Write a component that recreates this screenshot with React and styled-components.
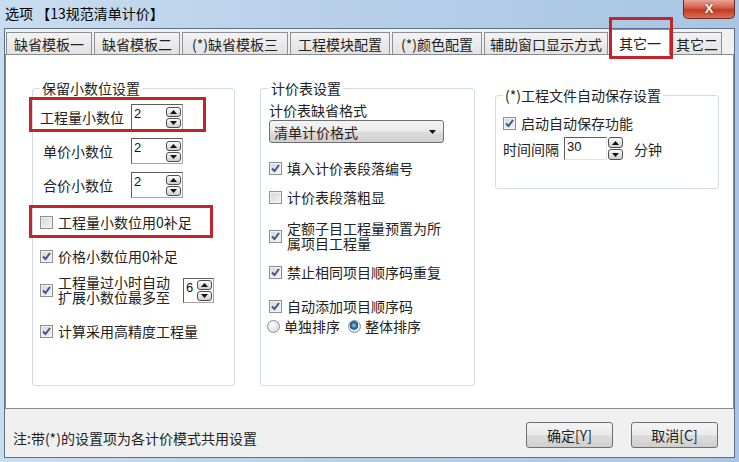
import React from "react";
import styled, { createGlobalStyle } from "styled-components";

const GlobalStyle = createGlobalStyle`
  html, body {
    margin: 0;
    padding: 0;
  }
  body {
    width: 739px;
    height: 462px;
    overflow: hidden;
    font-family: "Noto Sans CJK SC", "Liberation Sans", sans-serif;
    font-size: 14px;
    color: #222;
  }
`;

const tabs = [
  { label: "缺省模板一", w: 86 },
  { label: "缺省模板二", w: 86 },
  { label: "(*)缺省模板三", w: 106 },
  { label: "工程模块配置", w: 100 },
  { label: "(*)颜色配置", w: 90 },
  { label: "辅助窗口显示方式", w: 124 },
  { label: "其它一", w: 60, active: true },
  { label: "其它二", w: 50 },
];

const Arrow = ({ down }) => (
  <svg width="9" height="6" viewBox="0 0 9 6">
    <path d={down ? "M1 1 L8 1 L4.5 5 Z" : "M1 5 L8 5 L4.5 1 Z"} fill="#111" />
  </svg>
);

const Spinner = ({ h = 10 }) => (
  <SpinBox>
    <SpinBtn $h={h}>
      <Arrow />
    </SpinBtn>
    <SpinBtn $h={h}>
      <Arrow down />
    </SpinBtn>
  </SpinBox>
);

const Checkbox = ({ checked }) => (
  <CheckBoxShape>
    {checked && (
      <svg width="11" height="11" viewBox="0 0 11 11">
        <path d="M2 5.5 L4.5 8 L9 2" stroke="#3f558c" strokeWidth="2" fill="none" />
      </svg>
    )}
  </CheckBoxShape>
);

const Check = ({ checked, children, mt, mark }) => (
  <CheckRow $mt={mt}>
    <Checkbox checked={checked} />
    {children}
    {mark && <Mark {...mark} />}
  </CheckRow>
);

const NumField = ({ label, indent, mt, mark }) => (
  <NumRow $mt={mt}>
    <FieldLabel $indent={indent}>{label}</FieldLabel>
    <NumInput $w={52} $h={26}>
      <InputValue>2</InputValue>
      <Spinner />
    </NumInput>
    {mark && <Mark {...mark} />}
  </NumRow>
);

const App = () => {
  return (
    <>
      <GlobalStyle />
      <Window>
        <TitleBar>
          <Title>选项 【13规范清单计价】</Title>
          <CloseBtn>X</CloseBtn>
        </TitleBar>
        <Body>
          <TabRow>
            {tabs.map((t) => (
              <Tab key={t.label} $w={t.w} $active={t.active}>
                {t.label}
                {t.active && <Mark top={-13} left={-2} width={64} height={42} />}
              </Tab>
            ))}
          </TabRow>

          <Panel>
            <Group $w={203} $h={306} $pad="8px 7px 0 7px">
              <Legend>保留小数位设置</Legend>
              <Column>
                <NumField
                  label="工程量小数位"
                  mark={{ top: -7, left: -11, width: 177, height: 35 }}
                />
                <NumField label="单价小数位" indent={3} mt={8} />
                <NumField label="合价小数位" indent={3} mt={8} />
                <Check mt={16} mark={{ top: -9, left: -11, width: 184, height: 33 }}>
                  <Text>工程量小数位用0补足</Text>
                </Check>
                <Check checked mt={18}>
                  <Text>价格小数位用0补足</Text>
                </Check>
                <Check checked mt={11}>
                  <TwoLine>
                    工程量过小时自动
                    <br />
                    扩展小数位最多至
                  </TwoLine>
                  <NumInput $w={31} $h={25} $ml={8}>
                    <InputValue>6</InputValue>
                    <Spinner />
                  </NumInput>
                </Check>
                <Check checked mt={18}>
                  <Text>计算采用高精度工程量</Text>
                </Check>
              </Column>
            </Group>

            <Group $w={215} $h={306} $pad="6px 8px 0 8px">
              <Legend>计价表设置</Legend>
              <Column>
                <Text>计价表缺省格式</Text>
                <Select>
                  <span>清单计价格式</span>
                  <Arrow down />
                </Select>
                <Check checked mt={17}>
                  <Text>填入计价表段落编号</Text>
                </Check>
                <Check mt={13}>
                  <Text>计价表段落粗显</Text>
                </Check>
                <Check checked mt={16}>
                  <TwoLine>
                    定额子目工程量预置为所
                    <br />
                    属项目工程量
                  </TwoLine>
                </Check>
                <Check checked mt={13}>
                  <Text>禁止相同项目顺序码重复</Text>
                </Check>
                <Check checked mt={18}>
                  <Text>自动添加项目顺序码</Text>
                </Check>
                <RadioRow>
                  <RadioItem>
                    <Radio />
                    <Text>单独排序</Text>
                  </RadioItem>
                  <RadioItem>
                    <Radio $on />
                    <Text>整体排序</Text>
                  </RadioItem>
                </RadioRow>
              </Column>
            </Group>

            <Group $w={224} $h={102} $mt={7} $pad="12px 8px 0 7px">
              <Legend>(*)工程文件自动保存设置</Legend>
              <Column>
                <Check checked>
                  <Text>启动自动保存功能</Text>
                </Check>
                <TimeRow>
                  <Text>时间间隔</Text>
                  <NumInput $w={43} $h={23} $ml={4} $flat>
                    <InputValue>30</InputValue>
                  </NumInput>
                  <Spinner h={11} />
                  <Text $ml={10}>分钟</Text>
                </TimeRow>
              </Column>
            </Group>
          </Panel>

          <Footer>
            <Note>注:带(*)的设置项为各计价模式共用设置</Note>
            <Buttons>
              <Button>确定[Y]</Button>
              <Button>取消[C]</Button>
            </Buttons>
          </Footer>
        </Body>
      </Window>
    </>
  );
};

export default App;

const Window = styled.div`
  width: 739px;
  height: 462px;
  display: flex;
  flex-direction: column;
  background: linear-gradient(90deg, #c9ddf0 0%, #b9d1ea 40%, #a9c5e3 100%);
`;

const TitleBar = styled.div`
  height: 28px;
  display: flex;
  align-items: flex-start;
  padding-left: 5px;
`;

const Title = styled.div`
  padding-top: 5px;
  line-height: 16px;
  color: #000;
`;

const CloseBtn = styled.div`
  margin-left: auto;
  margin-right: 4px;
  width: 52px;
  height: 19px;
  box-sizing: border-box;
  border: 1px solid #6e2b22;
  border-top: none;
  border-radius: 0 0 5px 5px;
  background: linear-gradient(180deg, #e9a597 0%, #d25a45 45%, #c2391f 55%, #d8705a 100%);
  color: #fff;
  font-family: "Liberation Sans", sans-serif;
  font-weight: bold;
  font-size: 13px;
  text-align: center;
  line-height: 17px;
  text-shadow: 0 0 2px #5a1a10;
`;

const Body = styled.div`
  margin: 0 4px;
  height: 430px;
  box-sizing: border-box;
  border: 1px solid #5d7286;
  background: #f0f0f0;
  display: flex;
  flex-direction: column;
`;

const TabRow = styled.div`
  height: 25px;
  display: flex;
  align-items: flex-end;
  gap: 2px;
  padding-left: 1px;
`;

const Tab = styled.div`
  position: relative;
  box-sizing: border-box;
  width: ${(p) => p.$w}px;
  height: ${(p) => (p.$active ? 26 : 22)}px;
  margin-bottom: ${(p) => (p.$active ? -1 : 0)}px;
  z-index: ${(p) => (p.$active ? 2 : 1)};
  border: 1px solid #8c8e94;
  border-bottom: none;
  background: ${(p) => (p.$active ? "#fff" : "linear-gradient(180deg, #f3f3f3, #e2e2e2)")};
  display: flex;
  align-items: center;
  justify-content: center;
  line-height: 16px;
  white-space: nowrap;
`;

const Mark = styled.div.attrs((p) => ({
  style: { top: p.top, left: p.left, width: p.width, height: p.height },
}))`
  position: absolute;
  box-sizing: border-box;
  border: 3px solid #c3242b;
  pointer-events: none;
`;

const Panel = styled.div`
  height: 355px;
  box-sizing: border-box;
  border: 1px solid #898c95;
  background: #fff;
  display: flex;
  align-items: flex-start;
  padding: 25px 0 0 26px;
`;

const Group = styled.fieldset`
  box-sizing: border-box;
  flex: none;
  width: ${(p) => p.$w}px;
  height: ${(p) => p.$h}px;
  margin: ${(p) => p.$mt || 0}px 25px 0 0;
  &:nth-of-type(2) {
    margin-right: 20px;
  }
  padding: ${(p) => p.$pad};
  border: 1px solid #d3dce3;
  border-radius: 3px;
  min-inline-size: 0;
`;

const Legend = styled.legend`
  padding: 0 2px;
  line-height: 16px;
`;

const Column = styled.div`
  display: flex;
  flex-direction: column;
  align-items: flex-start;
`;

const Text = styled.span`
  line-height: 16px;
  white-space: nowrap;
  margin-left: ${(p) => p.$ml || 0}px;
`;

const TwoLine = styled.span`
  line-height: 15px;
  white-space: nowrap;
`;

const NumRow = styled.div`
  position: relative;
  margin-top: ${(p) => p.$mt || 0}px;
  display: grid;
  grid-template-columns: 91px auto;
  align-items: center;
`;

const FieldLabel = styled.span`
  line-height: 16px;
  padding-left: ${(p) => p.$indent || 0}px;
  white-space: nowrap;
`;

const NumInput = styled.div`
  box-sizing: border-box;
  width: ${(p) => p.$w}px;
  height: ${(p) => p.$h}px;
  margin-left: ${(p) => p.$ml || 0}px;
  border: 1px solid #8a8a8a;
  border-top-color: #5e5e5e;
  border-left-color: #5e5e5e;
  border-right-color: ${(p) => (p.$flat ? "#e3e3e3" : "#a5a5a5")};
  border-bottom-color: ${(p) => (p.$flat ? "#e3e3e3" : "#a5a5a5")};
  background: #fff;
  display: flex;
  justify-content: space-between;
  align-items: center;
  padding: 0 1px 0 2px;
`;

const InputValue = styled.span`
  align-self: flex-start;
  font-family: "Liberation Sans", sans-serif;
  font-size: 13px;
  line-height: 15px;
  padding-top: 1px;
  color: #111;
`;

const SpinBox = styled.div`
  display: flex;
  flex-direction: column;
  gap: 1px;
`;

const SpinBtn = styled.div`
  box-sizing: border-box;
  width: 15px;
  height: ${(p) => p.$h}px;
  border: 1px solid #4f4f4f;
  border-radius: 3px;
  background: linear-gradient(180deg, #fbfbfb, #cfcfcf);
  display: flex;
  align-items: center;
  justify-content: center;
`;

const CheckRow = styled.div`
  position: relative;
  margin-top: ${(p) => p.$mt || 0}px;
  display: flex;
  align-items: center;
  gap: 5px;
`;

const CheckBoxShape = styled.span`
  box-sizing: border-box;
  flex: none;
  width: 13px;
  height: 13px;
  border: 1px solid #8e8f8f;
  background: linear-gradient(135deg, #d4d6d8, #f4f4f4);
  box-shadow: inset 0 0 0 1px #f2f2f2;
  display: flex;
  align-items: center;
  justify-content: center;
`;

const Select = styled.div`
  box-sizing: border-box;
  margin-top: 2px;
  width: 175px;
  height: 23px;
  border: 1px solid #707070;
  border-radius: 3px;
  background: linear-gradient(180deg, #f3f3f3 0%, #ebebeb 48%, #dddddd 52%, #cfcfcf 100%);
  display: flex;
  align-items: center;
  justify-content: space-between;
  padding: 0 6px 0 4px;
  line-height: 16px;
`;

const RadioRow = styled.div`
  margin-top: 4px;
  margin-left: -2px;
  display: flex;
  gap: 8px;
`;

const RadioItem = styled.div`
  display: flex;
  align-items: center;
  gap: 4px;
`;

const Radio = styled.span`
  box-sizing: border-box;
  width: 13px;
  height: 13px;
  border-radius: 50%;
  border: 1px solid #8e8f8f;
  background: ${(p) =>
    p.$on
      ? "radial-gradient(circle at 45% 40%, #9fd3f2 0, #2f79ad 2.5px, #1d4f78 4px, #e9e9e9 4.6px, #d5d5d5 100%)"
      : "radial-gradient(circle at 40% 35%, #ffffff, #d0d0d0)"};
`;

const TimeRow = styled.div`
  margin-top: 6px;
  display: flex;
  align-items: center;
  gap: 1px;
`;

const Footer = styled.div`
  flex: 1;
  display: flex;
  align-items: center;
  justify-content: space-between;
  padding: 4px 16px 0 8px;
`;

const Note = styled.span`
  margin-top: 6px;
  line-height: 16px;
`;

const Buttons = styled.div`
  display: flex;
  gap: 18px;
`;

const Button = styled.div`
  box-sizing: border-box;
  width: 87px;
  height: 26px;
  border: 1px solid #707070;
  border-radius: 3px;
  background: linear-gradient(180deg, #f4f4f4 0%, #ebebeb 48%, #dddddd 52%, #cfcfcf 100%);
  display: flex;
  align-items: center;
  justify-content: center;
  line-height: 16px;
`;
